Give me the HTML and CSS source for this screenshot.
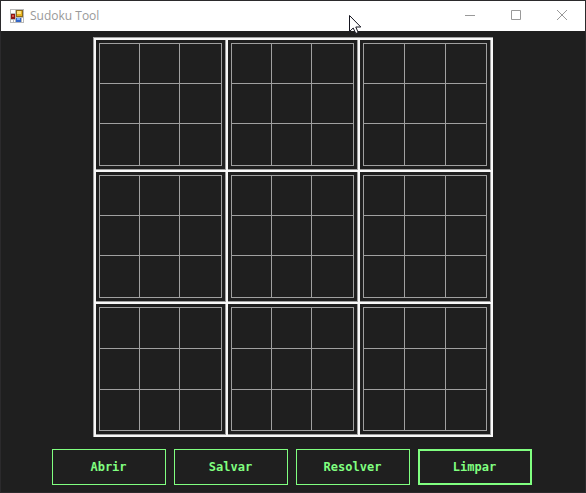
FILE: index.html
```html
<!DOCTYPE html>
<html lang="pt">
<head>
<meta charset="utf-8">
<title>Sudoku Tool</title>
<link rel="stylesheet" href="styles.css">
</head>
<body>
<div class="window">
  <header class="titlebar">
    <svg class="app-icon" width="14" height="14" viewBox="0 0 14 14" shape-rendering="crispEdges" aria-hidden="true">
      <path fill="#b9b9b9" d="M0 0h14v14H0z"/>
      <path fill="#fff" d="M1 1h4v3H1zM1 11h2v2H1zM4 11h1v2H4zM12 9h1v4h-1z"/>
      <path fill="#8c6a1c" d="M6 1h7v7H6z"/>
      <path fill="#e8b51f" d="M7 2h5v5H7z"/>
      <path fill="#ffe07a" d="M7 2h4v3H7z"/>
      <path fill="#8e1414" d="M1 5h4v5H1z"/>
      <path fill="#d9544a" d="M2 6h2v2H2z"/>
      <path fill="#3467c9" d="M6 9h5v4H6z"/>
      <path fill="#7fb0ff" d="M7 9h3v2H7z"/>
    </svg>
    <h1 class="title">Sudoku Tool</h1>
    <div class="controls">
      <button class="control" type="button" aria-label="Minimizar">
        <svg width="10" height="10" viewBox="0 0 10 10"><path d="M0 5.500h10"/></svg>
      </button>
      <button class="control" type="button" aria-label="Maximizar">
        <svg width="10" height="10" viewBox="0 0 10 10"><path d="M.5 .5h9v9h-9z"/></svg>
      </button>
      <button class="control" type="button" aria-label="Fechar">
        <svg width="10" height="10" viewBox="0 0 10 10"><path d="M0 0l10 10M10 0L0 10"/></svg>
      </button>
    </div>
  </header>
  <main class="content">
    <div class="board">
      <div class="block"><div class="cells"><i></i><i></i><i></i><i></i><i></i><i></i><i></i><i></i><i></i></div></div>
      <div class="block"><div class="cells"><i></i><i></i><i></i><i></i><i></i><i></i><i></i><i></i><i></i></div></div>
      <div class="block last-column"><div class="cells"><i></i><i></i><i></i><i></i><i></i><i></i><i></i><i></i><i></i></div></div>
      <div class="block"><div class="cells"><i></i><i></i><i></i><i></i><i></i><i></i><i></i><i></i><i></i></div></div>
      <div class="block"><div class="cells"><i></i><i></i><i></i><i></i><i></i><i></i><i></i><i></i><i></i></div></div>
      <div class="block last-column"><div class="cells"><i></i><i></i><i></i><i></i><i></i><i></i><i></i><i></i><i></i></div></div>
      <div class="block last-row"><div class="cells"><i></i><i></i><i></i><i></i><i></i><i></i><i></i><i></i><i></i></div></div>
      <div class="block last-row"><div class="cells"><i></i><i></i><i></i><i></i><i></i><i></i><i></i><i></i><i></i></div></div>
      <div class="block last-column last-row"><div class="cells"><i></i><i></i><i></i><i></i><i></i><i></i><i></i><i></i><i></i></div></div>
    </div>
    <div class="actions">
      <button class="action" type="button">Abrir</button>
      <button class="action" type="button">Salvar</button>
      <button class="action" type="button">Resolver</button>
      <button class="action is-default" type="button">Limpar</button>
    </div>
  </main>
  <svg class="pointer" width="13" height="20" viewBox="0 0 13 20" aria-hidden="true">
    <path d="M.5 .5v16l3.700-3.500 2.600 5.500 2.400-1-2.400-5.500h5z" fill="#fff" stroke="#15151f"/>
  </svg>
</div>
</body>
</html>
```
FILE: styles.css
```css
* {
  box-sizing: border-box;
}

body {
  margin: 0;
  background: #1f1f1f;
}

.window {
  position: relative;
  display: flex;
  flex-direction: column;
  min-height: 100vh;
  border: 1px solid #2b2a2c;
  background: #1f1f1f;
}

.titlebar {
  display: flex;
  align-items: center;
  height: 30px;
  padding-left: 9px;
  background: #fff;
}

.title {
  flex: 1;
  margin: 0 0 0 6px;
  color: #999;
  font: 400 12px/16px "Open Sans", sans-serif;
}

.controls {
  display: flex;
  align-self: stretch;
}

.control {
  display: flex;
  align-items: center;
  justify-content: center;
  width: 46px;
  padding: 0 0 2px;
  border: 0;
  background: none;
}

.control path {
  fill: none;
  stroke: #999;
}

.content {
  display: flex;
  flex-direction: column;
  align-items: center;
  gap: 12px;
  padding-top: 6px;
}

.board {
  display: grid;
  grid-template-columns: 130px 130px 131px;
  grid-template-rows: 130px 130px 131px;
  gap: 2px;
  padding: 2px;
  border: solid #a0a0a0;
  border-width: 1px 0 0 1px;
  background: #f8f8f8;
}

.block {
  display: grid;
  padding: 3px;
  border: solid #a0a0a0;
  border-width: 0 1px 1px 0;
  background: #1f1f1f;
}

.cells {
  display: grid;
  grid-template-columns: 39px 39px 1fr;
  grid-template-rows: 39px 39px 1fr;
  gap: 1px;
  padding: 1px;
  background: #a0a0a0;
}

.last-column .cells {
  grid-template-columns: 40px 40px 1fr;
}

.last-row .cells {
  grid-template-rows: 40px 40px 1fr;
}

.cells i {
  background: #1f1f1f;
}

.actions {
  display: flex;
  gap: 8px;
  padding-right: 2px;
}

.action {
  width: 114px;
  height: 36px;
  padding: 0 1px 0 0;
  border: 1px solid #80ff80;
  background: #1f1f1f;
  color: #80ff80;
  font: 700 12px/16px "DejaVu Sans Mono", monospace;
}

.is-default {
  border-width: 2px;
}

.pointer {
  position: absolute;
  top: 14px;
  left: 348px;
}
```
